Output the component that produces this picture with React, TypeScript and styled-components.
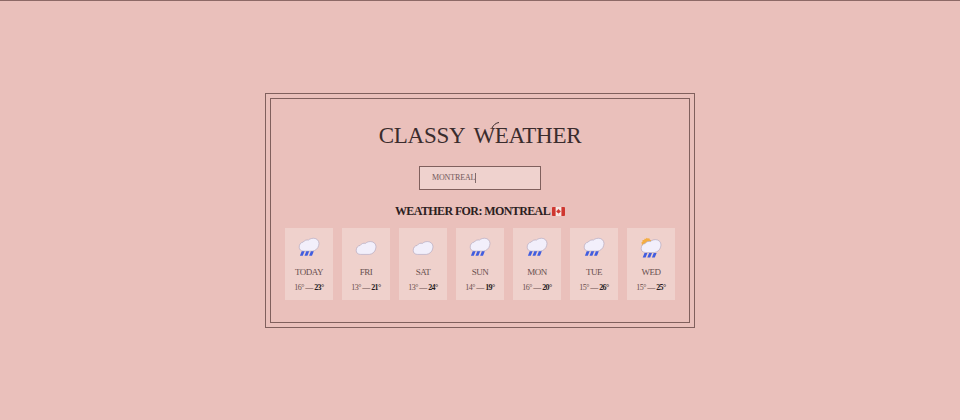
import React from "react";
import styled, { createGlobalStyle } from "styled-components";

const GlobalStyle = createGlobalStyle`
  *, *::before, *::after { box-sizing: border-box; }
  html, body { margin: 0; padding: 0; }
  body { background: #eac0bb; overflow: hidden; }
`;

const Page = styled.main`
  height: 420px;
  display: flex;
  flex-direction: column;
  align-items: center;
  padding-top: 92px;
  border-top: 1px solid #8d6966;
  background: #eac0bb;
  color: #3a2c2d;
  font-family: "Liberation Serif", serif;
`;

const Frame = styled.section`
  width: 430px;
  height: 235px;
  padding: 4px;
  border: 1px solid #80605d;
`;

const Panel = styled.div`
  height: 100%;
  padding: 22px 14px 0;
  display: flex;
  flex-direction: column;
  align-items: center;
  border: 1px solid #80605d;
`;

const Title = styled.h1`
  margin: 0;
  height: 30px;
  font-size: 23px;
  line-height: 30px;
  font-weight: 400;
  letter-spacing: -0.3px;
  word-spacing: 4px;
  white-space: nowrap;
`;

const Initial = styled.span`
  position: relative;
`;

const Flourish = styled.svg<{ $left: number; $top: number }>`
  position: absolute;
  left: ${(p) => p.$left}px;
  top: ${(p) => p.$top}px;
  overflow: visible;
  fill: none;
  stroke: currentColor;
`;

const SearchField = styled.div`
  width: 122px;
  height: 24px;
  margin-top: 15px;
  padding-left: 12px;
  display: flex;
  align-items: center;
  border: 1px solid #80605d;
  background: #efd2ce;
  color: #72585a;
  font-size: 8px;
  line-height: 10px;
  letter-spacing: -0.15px;
`;

const Caret = styled.span`
  width: 1px;
  height: 10px;
  background: #806a6a;
`;

const Heading = styled.h2`
  margin: 13px 0 0;
  height: 16px;
  display: flex;
  align-items: center;
  gap: 2px;
  font-size: 12px;
  line-height: 16px;
  font-weight: 700;
  letter-spacing: -0.6px;
  white-space: nowrap;
  color: #2c2021;
`;

const Days = styled.ul`
  list-style: none;
  margin: 9px 0 0;
  padding: 0;
  display: grid;
  grid-template-columns: repeat(7, 48px);
  gap: 9px;
`;

const Day = styled.li`
  height: 72px;
  padding-top: 10px;
  display: flex;
  flex-direction: column;
  align-items: center;
  background: #efd1cc;
  white-space: nowrap;
`;

const DayName = styled.p`
  margin: 8px 0 0;
  font-size: 9px;
  line-height: 12px;
  letter-spacing: -0.5px;
  color: #684f4e;
`;

const Range = styled.p`
  margin: 4px 0 0;
  font-size: 8px;
  line-height: 12px;
  letter-spacing: -0.55px;
  color: #684f4e;

  strong { color: #281d1e; }
`;

type Weather = "rain" | "cloud" | "sunrain";

const CLOUD =
  "M4.6 13.3C2 13.3.2 11.8.2 9.4.2 6.6 1.7 4.7 4.2 4.3 5.4 2.5 7.6 1.8 9.4 2.3 11 .7 14.2-.1 16.8.9c2.9 1.2 3.8 4.2 2.8 7-.7 2.8-3 5-6.2 5.4z";

const cloudOffset: Record<Weather, number> = { rain: -0.2, cloud: 3.1, sunrain: 1.2 };

function WeatherIcon({ kind }: { kind: Weather }) {
  const y = cloudOffset[kind];
  return (
    <svg width="20" height="20" viewBox="0 0 20 20" overflow="visible">
      {kind === "sunrain" && (
        <path
          d="M5.5-.2 6.8.5 8.3.2 8.9 1.7 10.3 2.3 9.8 5 3 9 .6 7.5 1 6 .2 4.8 1.5 3.7 1.5 2.1 3.1 2 3.8.6 5 .9z"
          fill="#f4ad43"
        />
      )}
      <path
        d={CLOUD}
        transform={`translate(0 ${y})`}
        fill="#f2effb"
        stroke="#aba3bc"
        strokeWidth="0.6"
      />
      {kind !== "cloud" && (
        <path
          d="M2.7 13.2H5.6L3.8 17.8H.9zM7.3 13.2h2.9L8.4 17.8H5.5zM11.9 13.2h2.9L13 17.8h-2.9z"
          transform={kind === "sunrain" ? "translate(0.8 1.8)" : undefined}
          fill="#405de0"
        />
      )}
    </svg>
  );
}

function CanadaFlag() {
  return (
    <svg width="13" height="9" viewBox="0 0 13 9">
      <rect width="13" height="9" rx="0.8" fill="#f6e7e3" />
      <path d="M.8 0H3.6V9H.8Q0 9 0 8.2V.8Q0 0 .8 0M9.4 0h2.8q.8 0 .8.8v7.4q0 .8-.8.8H9.4z" fill="#cf3730" />
      <path d="M6.5 1.8 7.2 3 7.9 2.8 7.7 4 8.9 3.8 8.4 5 7.2 6 6.7 6V7.2H6.3V6L5.8 6 4.6 5 4.1 3.8 5.3 4 5.1 2.8 5.8 3z" fill="#cf3730" />
    </svg>
  );
}

const forecast: { name: string; low: number; high: number; kind: Weather }[] = [
  { name: "TODAY", low: 16, high: 23, kind: "rain" },
  { name: "FRI", low: 13, high: 21, kind: "cloud" },
  { name: "SAT", low: 13, high: 24, kind: "cloud" },
  { name: "SUN", low: 14, high: 19, kind: "rain" },
  { name: "MON", low: 16, high: 20, kind: "rain" },
  { name: "TUE", low: 15, high: 26, kind: "rain" },
  { name: "WED", low: 15, high: 25, kind: "sunrain" },
];

export default function App() {
  return (
    <>
      <GlobalStyle />
      <Page>
        <Frame>
          <Panel>
            <Title>
              CLASSY{" "}
              <Initial>
                W
                <Flourish $left={19} $top={-1} width="7" height="6" strokeWidth="1">
                  <path d="M0 6C1.5 3 4 .8 7 .5" />
                </Flourish>
              </Initial>
              EATHER
            </Title>
            <SearchField>
              <span>MONTREAL</span>
              <Caret />
            </SearchField>
            <Heading>
              <span>WEATHER FOR: MONTREAL</span>
              <CanadaFlag />
            </Heading>
            <Days>
              {forecast.map((day) => (
                <Day key={day.name}>
                  <WeatherIcon kind={day.kind} />
                  <DayName>{day.name}</DayName>
                  <Range>
                    {day.low}° — <strong>{day.high}°</strong>
                  </Range>
                </Day>
              ))}
            </Days>
          </Panel>
        </Frame>
      </Page>
    </>
  );
}
